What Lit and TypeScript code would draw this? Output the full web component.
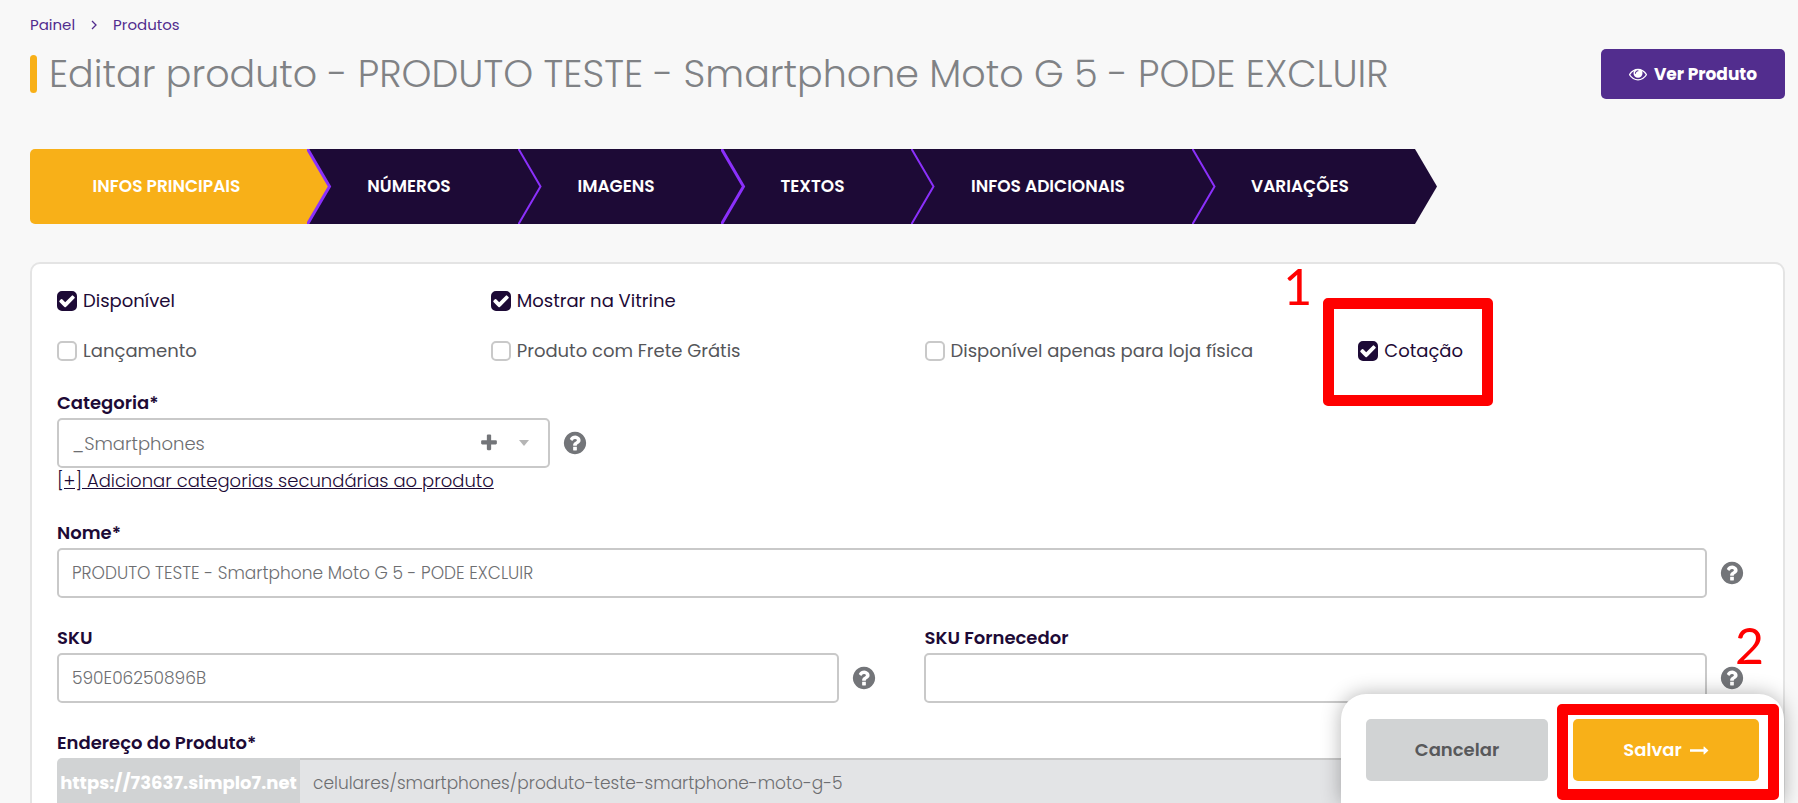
import { LitElement, html, css, svg, nothing } from "lit";
import { customElement, property } from "lit/decorators.js";
import { classMap } from "lit/directives/class-map.js";

const icons: Record<string, string> = {
  eye: "M1664 960q-152-236-381-353 61 104 61 225 0 185-131.5 316.5t-316.5 131.5-316.5-131.5-131.5-316.5q0-121 61-225-229 117-381 353 133 205 333.5 326.5t434.5 121.5 434.5-121.5 333.5-326.5zm-720-384q0-20-14-34t-34-14q-125 0-214.5 89.5t-89.5 214.5q0 20 14 34t34 14 34-14 14-34q0-86 61-147t147-61q20 0 34-14t14-34zm848 384q0 34-20 69-140 230-376.5 368.5t-499.5 138.5-499.5-139-376.5-368q-20-35-20-69t20-69q140-229 376.5-368t499.5-139 499.5 139 376.5 368q20 35 20 69z",
  help: "M1024 1376v-192q0-14-9-23t-23-9h-192q-14 0-23 9t-9 23v192q0 14 9 23t23 9h192q14 0 23-9t9-23zm256-672q0-88-55.5-163t-138.5-116-170-41q-243 0-371 213-15 24 8 42l132 100q7 6 19 6 16 0 25-12 53-68 86-92 34-24 86-24 48 0 85.5 26t37.5 59q0 38-20 61t-68 45q-63 28-115.5 86.5t-52.5 125.5v36q0 14 9 23t23 9h192q14 0 23-9t9-23q0-19 21.5-49.5t54.5-49.5q32-18 49-28.5t46-35 44.5-48 28-60.5 12.5-81zm384 192q0 209-103 385.5t-279.5 279.5-385.5 103-385.5-103-279.5-279.5-103-385.5 103-385.5 279.5-279.5 385.5-103 385.5 103 279.5 279.5 103 385.5z",
  check: "M1671 566q0 40-28 68l-724 724-136 136q-28 28-68 28t-68-28l-136-136-362-362q-28-28-28-68t28-68l136-136q28-28 68-28t68 28l294 295 656-657q28-28 68-28t68 28l136 136q28 28 28 68z",
  plus: "M1600 736v192q0 40-28 68t-68 28h-416v416q0 40-28 68t-68 28h-192q-40 0-68-28t-28-68v-416h-416q-40 0-68-28t-28-68v-192q0-40 28-68t68-28h416v-416q0-40 28-68t68-28h192q40 0 68 28t28 68v416h416q40 0 68 28t28 68z",
  arrow: "M1728 893q0 14-10 24l-384 354q-16 14-35 6-19-9-19-29v-224h-1248q-14 0-23-9t-9-23v-192q0-14 9-23t23-9h1248v-224q0-21 19-29t35 5l384 350q10 10 10 24z",
};

const icon = (name: string, cls: string) => html`
  <svg class=${cls} viewBox="0 0 1792 1792" aria-hidden="true">${svg`<path fill="currentColor" d=${icons[name]}></path>`}</svg>
`;

@customElement("product-steps")
export class ProductSteps extends LitElement {
  static styles = css`
    :host { display: block; }
    .steps {
      display: grid;
      grid-template-columns: 277fr 211fr 203fr 190fr 281fr 223fr;
      max-width: 1385px;
      margin: 0; padding: 0;
      list-style: none;
    }
    .step { position: relative; height: 75px; background: #1d0a36; color: #1d0a36; }
    .step.active { background: #f8b018; color: #f8b018; border-radius: 5px 0 0 5px; }
    .link {
      display: block;
      line-height: 74px;
      padding-right: 7px;
      text-align: center;
      white-space: nowrap;
      color: #fff;
      font-size: 17px;
      font-weight: 600;
      text-decoration: none;
    }
    .active .link { padding-right: 4px; }
    .tip { position: absolute; z-index: 1; top: 0; left: 100%; width: 26px; height: 75px; display: block; }
  `;

  private steps = ["INFOS PRINCIPAIS", "NÚMEROS", "IMAGENS", "TEXTOS", "INFOS ADICIONAIS", "VARIAÇÕES"];

  render() {
    const last = this.steps.length - 1;
    return html`<nav aria-label="Etapas"><ol class="steps">
      ${this.steps.map((s, i) => html`
        <li class=${classMap({ step: true, active: i === 0 })}>
          <a class="link" href="#">${s}</a>
          <svg class="tip" viewBox="0 0 26 75" aria-hidden="true">
            <path fill="currentColor" d="M-1 0H0L22 37.5L0 75H-1Z"></path>
            ${i === last ? nothing : svg`<path d="M0 -1L22.5 37.5L0 76" fill="none" stroke="#8b30fb" stroke-width=${i === 0 || i === 2 ? 3 : 2}></path>`}
          </svg>
        </li>`)}
    </ol></nav>`;
  }
}

@customElement("check-option")
export class CheckOption extends LitElement {
  @property() label = "";
  @property({ type: Boolean }) checked = false;

  static styles = css`
    :host { display: flex; align-items: center; height: 50px; }
    .option { display: flex; align-items: center; gap: 6px; font-size: 18px; line-height: 24px; color: #55565a; white-space: nowrap; }
    .option.on { color: #1d0a36; }
    .box { display: grid; }
    .input, .mark { grid-area: 1 / 1; }
    .input {
      appearance: none;
      box-sizing: border-box;
      width: 20px; height: 20px; margin: 0;
      border: 2px solid #c9c9c9;
      border-radius: 5px;
      background: #fff;
    }
    .input:checked { background: #1d0a36; border-color: #1d0a36; }
    .mark { width: 18px; height: 18px; place-self: center; color: #fff; pointer-events: none; }
  `;

  render() {
    return html`<label class=${classMap({ option: true, on: this.checked })}>
      <span class="box">
        <input class="input" type="checkbox" .checked=${this.checked}>
        ${this.checked ? icon("check", "mark") : nothing}
      </span>
      ${this.label}
    </label>`;
  }
}

@customElement("app-root")
export class AppRoot extends LitElement {
  static styles = css`
    :host {
      display: block;
      position: relative;
      height: 100vh;
      overflow: hidden;
      background: #f8f8f8;
      font-family: Poppins, Inter, "Open Sans", sans-serif;
      color: #1d0a36;
    }
    * { box-sizing: border-box; }
    .page { padding: 13px 13px 0 30px; }
    .crumbs { display: flex; align-items: center; gap: 16px; font-size: 15px; line-height: 24px; }
    .crumb { color: #522d8e; text-decoration: none; }
    .chevron { width: 6px; height: 10px; color: #522d8e; }
    .head { display: flex; align-items: center; justify-content: space-between; margin-top: 12px; }
    .title { display: flex; align-items: center; gap: 12px; margin: 0; font-size: 38px; line-height: 50px; font-weight: 300; color: #808285; }
    .title::before { content: ""; width: 7px; height: 38px; border-radius: 4px; background: #f8b018; }
    .btn { display: flex; align-items: center; justify-content: center; border: 0; border-radius: 5px; font-family: inherit; font-size: 18px; font-weight: 600; line-height: 24px; }
    .view { gap: 7px; width: 184px; height: 50px; background: #522d8e; color: #fff; font-size: 17px; font-weight: 700; }
    .eye { width: 18px; height: 18px; }
    .steps { margin-top: 50px; }
    .card { margin-top: 38px; padding: 12px 6px 25px 10px; border: 2px solid #e4e4e4; border-radius: 10px; background: #fff; }
    .checks, .fields { display: grid; }
    .checks { grid-template-columns: repeat(4, 1fr); }
    .cell { padding-left: 15px; }
    .row-start { grid-column: 1; }
    .marked { position: relative; }
    .frame { position: absolute; z-index: 3; border: 11px solid #f00; border-radius: 5px; pointer-events: none; }
    .frame-option { left: -20px; top: -28px; width: 170px; height: 108px; }
    .number { position: absolute; z-index: 4; font-family: Lato, sans-serif; font-size: 50px; line-height: 50px; color: #f00; }
    .number-one { left: -60px; top: -65px; }
    .fields { grid-template-columns: repeat(6, 1fr); row-gap: 25px; margin-top: 12px; }
    .field { padding: 0 15px; }
    .third { grid-column: 1 / span 2; }
    .full { grid-column: 1 / -1; }
    .half { grid-column: span 3; }
    .label { display: block; font-size: 18px; font-weight: 600; line-height: 30px; }
    .line { display: grid; grid-template-columns: 1fr 22px; align-items: center; gap: 14px; padding-right: 19px; }
    .help { display: block; width: 26px; height: 26px; margin: 0 -2px; color: #737579; }
    .control {
      width: 100%; height: 50px; margin: 0; padding: 0 13px;
      border: 2px solid #c9c9c9; border-radius: 5px; background: #fff;
      color: #6d6e71; font-family: inherit; font-size: 17px; font-weight: 300;
    }
    .select { appearance: none; font-size: 18px; }
    .pick { position: relative; }
    .add { position: absolute; right: 51px; top: 15px; width: 20px; height: 20px; padding: 0; border: 0; background: none; color: #737579; }
    .plus { display: block; width: 20px; height: 20px; }
    .caret { position: absolute; right: 21px; top: 22px; width: 10px; height: 6px; color: #b5b5b5; pointer-events: none; }
    .more { display: block; width: max-content; font-size: 18px; line-height: 25px; font-weight: 300; color: #1d0a36; }
    .address { display: flex; }
    .prefix { flex: none; width: 243px; height: 50px; line-height: 50px; text-align: center; border-radius: 5px 0 0 5px; background: #d1d3d4; color: #fff; font-size: 18px; font-weight: 700; }
    .path { border-left: 0; border-radius: 0 5px 5px 0; background: #e3e4e6; }
    .bar {
      position: absolute; z-index: 2; right: 14px; bottom: 0;
      display: flex; gap: 25px; padding: 25px 25px 22px;
      border-radius: 25px 25px 0 0; background: #fff;
      box-shadow: 0 0 20px rgba(0, 0, 0, 0.3);
    }
    .cancel { width: 182px; height: 62px; background: #d1d3d4; color: #58595b; }
    .save { gap: 8px; width: 186px; height: 62px; background: #f8b018; color: #fff; }
    .arrow { width: 19px; height: 19px; }
    .frame-save { right: 5px; top: 10px; width: 222px; height: 96px; }
    .number-two { right: 20px; top: -74px; }
  `;

  render() {
    const help = icon("help", "help");
    return html`
      <main class="page">
        <nav class="crumbs" aria-label="Caminho">
          <a class="crumb" href="#">Painel</a>
          <svg class="chevron" viewBox="0 0 6 10" aria-hidden="true"><path d="M1 1L5 5L1 9" fill="none" stroke="currentColor" stroke-width="1.3"></path></svg>
          <a class="crumb" href="#">Produtos</a>
        </nav>
        <header class="head">
          <h1 class="title">Editar produto - PRODUTO TESTE - Smartphone Moto G 5 - PODE EXCLUIR</h1>
          <button class="btn view" type="button">${icon("eye", "eye")}Ver Produto</button>
        </header>
        <product-steps class="steps"></product-steps>
        <form class="card">
          <div class="checks">
            <check-option class="cell" label="Disponível" checked></check-option>
            <check-option class="cell" label="Mostrar na Vitrine" checked></check-option>
            <check-option class="cell row-start" label="Lançamento"></check-option>
            <check-option class="cell" label="Produto com Frete Grátis"></check-option>
            <check-option class="cell" label="Disponível apenas para loja física"></check-option>
            <div class="marked">
              <check-option class="cell" label="Cotação" checked></check-option>
              <span class="frame frame-option"></span>
              <span class="number number-one">1</span>
            </div>
          </div>
          <div class="fields">
            <div class="field third">
              <label class="label" for="categoria">Categoria*</label>
              <div class="line">
                <div class="pick">
                  <select class="control select" id="categoria"><option>_Smartphones</option></select>
                  <button class="add" type="button" aria-label="Adicionar">${icon("plus", "plus")}</button>
                  <svg class="caret" viewBox="0 0 10 6" aria-hidden="true"><path d="M0 0H10L5 6Z" fill="currentColor"></path></svg>
                </div>
                ${help}
              </div>
              <a class="more" href="#">[+] Adicionar categorias secundárias ao produto</a>
            </div>
            <div class="field full">
              <label class="label" for="nome">Nome*</label>
              <div class="line"><input class="control" id="nome" value="PRODUTO TESTE - Smartphone Moto G 5 - PODE EXCLUIR">${help}</div>
            </div>
            <div class="field half">
              <label class="label" for="sku">SKU</label>
              <div class="line"><input class="control" id="sku" value="590E06250896B">${help}</div>
            </div>
            <div class="field half">
              <label class="label" for="fornecedor">SKU Fornecedor</label>
              <div class="line"><input class="control" id="fornecedor">${help}</div>
            </div>
            <div class="field full">
              <label class="label" for="endereco">Endereço do Produto*</label>
              <div class="line">
                <div class="address">
                  <span class="prefix">https://73637.simplo7.net</span>
                  <input class="control path" id="endereco" value="celulares/smartphones/produto-teste-smartphone-moto-g-5">
                </div>
                ${help}
              </div>
            </div>
          </div>
        </form>
      </main>
      <footer class="bar">
        <button class="btn cancel" type="button">Cancelar</button>
        <button class="btn save" type="submit">Salvar ${icon("arrow", "arrow")}</button>
        <span class="frame frame-save"></span>
        <span class="number number-two">2</span>
      </footer>
    `;
  }
}
